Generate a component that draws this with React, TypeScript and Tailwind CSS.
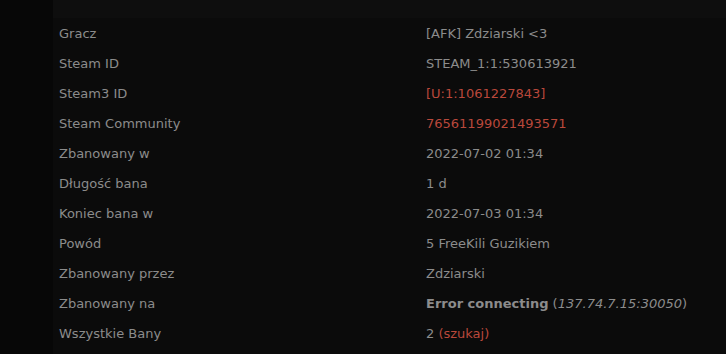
const rows: { label: string; value: React.ReactNode }[] = [
  { label: "Gracz", value: "[AFK] Zdziarski <3" },
  { label: "Steam ID", value: "STEAM_1:1:530613921" },
  { label: "Steam3 ID", value: <a className="text-[#b9483b]">[U:1:1061227843]</a> },
  { label: "Steam Community", value: <a className="text-[#b9483b]">76561199021493571</a> },
  { label: "Zbanowany w", value: "2022-07-02 01:34" },
  { label: "Długość bana", value: "1 d" },
  { label: "Koniec bana w", value: "2022-07-03 01:34" },
  { label: "Powód", value: "5 FreeKili Guzikiem" },
  { label: "Zbanowany przez", value: "Zdziarski" },
  {
    label: "Zbanowany na",
    value: (
      <>
        <b className="font-bold">Error connecting</b> (<i>137.74.7.15:30050</i>)
      </>
    ),
  },
  {
    label: "Wszystkie Bany",
    value: (
      <>
        2 <a className="text-[#b9483b]">(szukaj)</a>
      </>
    ),
  },
];

export default function App() {
  return (
    <div className="flex h-[354px] w-[726px] overflow-hidden bg-[#070707] font-['DejaVu_Sans',sans-serif] text-[13px] leading-[16px] text-[#8c8c8c]">
      <div className="w-[53px] shrink-0" />
      <div className="flex flex-1 flex-col bg-[#0b0b0b]">
        <div className="h-[18px] bg-[#0e0e0e]" />
        <div className="flex flex-col">
          {rows.map((r) => (
            <div key={r.label} className="flex h-[30px] items-center pt-[2px]">
              <div className="w-[373px] shrink-0 pl-[6px]">{r.label}</div>
              <div className="whitespace-nowrap">{r.value}</div>
            </div>
          ))}
        </div>
      </div>
    </div>
  );
}
